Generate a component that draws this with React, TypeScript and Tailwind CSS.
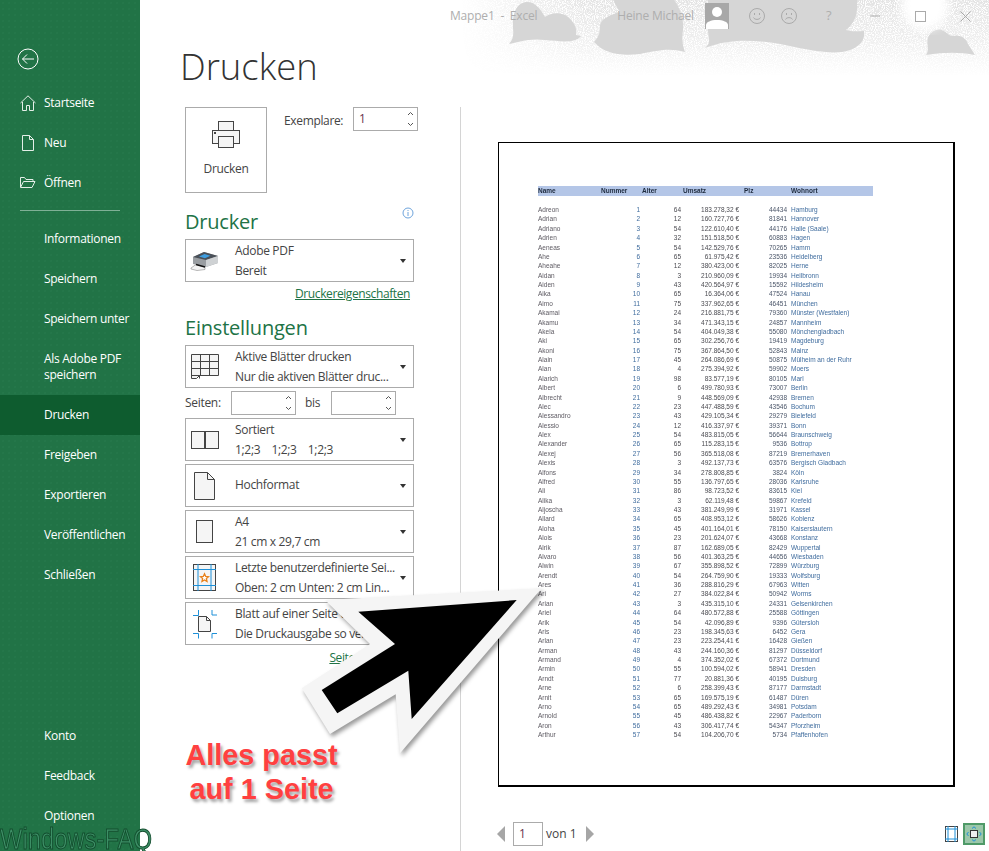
import type { ReactNode } from 'react'

const font = { ui: "font-['Open_Sans','Noto_Sans',sans-serif]" }

type Row = [string, number, number, string, number, string]

const rows: Row[] = [
  ['Adreon', 1, 64, '183.278,32 €', 44434, 'Hamburg'],
  ['Adrian', 2, 12, '160.727,76 €', 81841, 'Hannover'],
  ['Adriano', 3, 54, '122.610,40 €', 44176, 'Halle (Saale)'],
  ['Adrien', 4, 32, '151.518,50 €', 60883, 'Hagen'],
  ['Aeneas', 5, 54, '142.529,76 €', 70265, 'Hamm'],
  ['Ahe', 6, 65, '61.975,42 €', 23536, 'Heidelberg'],
  ['Aheahe', 7, 12, '380.423,00 €', 82025, 'Herne'],
  ['Aidan', 8, 3, '210.960,09 €', 19934, 'Heilbronn'],
  ['Aiden', 9, 43, '420.564,97 €', 15592, 'Hildesheim'],
  ['Aika', 10, 65, '16.364,06 €', 47524, 'Hanau'],
  ['Aimo', 11, 75, '337.962,65 €', 46451, 'München'],
  ['Akamai', 12, 24, '216.881,75 €', 79360, 'Münster (Westfalen)'],
  ['Akamu', 13, 34, '471.343,15 €', 24857, 'Mannheim'],
  ['Akela', 14, 54, '404.049,38 €', 55080, 'Mönchengladbach'],
  ['Aki', 15, 65, '302.256,76 €', 19419, 'Magdeburg'],
  ['Akoni', 16, 75, '367.864,50 €', 52843, 'Mainz'],
  ['Alain', 17, 45, '264.086,69 €', 50875, 'Mülheim an der Ruhr'],
  ['Alan', 18, 4, '275.394,92 €', 59902, 'Moers'],
  ['Alarich', 19, 98, '83.577,19 €', 80105, 'Marl'],
  ['Albert', 20, 6, '499.780,93 €', 73007, 'Berlin'],
  ['Albrecht', 21, 9, '448.569,09 €', 42938, 'Bremen'],
  ['Alec', 22, 23, '447.488,59 €', 43546, 'Bochum'],
  ['Alessandro', 23, 43, '429.105,34 €', 29279, 'Bielefeld'],
  ['Alessio', 24, 12, '416.337,97 €', 39371, 'Bonn'],
  ['Alex', 25, 54, '483.815,05 €', 56644, 'Braunschweig'],
  ['Alexander', 26, 65, '115.283,15 €', 9536, 'Bottrop'],
  ['Alexej', 27, 56, '365.518,08 €', 87219, 'Bremerhaven'],
  ['Alexis', 28, 3, '492.137,73 €', 63576, 'Bergisch Gladbach'],
  ['Alfons', 29, 34, '278.808,85 €', 3824, 'Köln'],
  ['Alfred', 30, 55, '136.797,65 €', 28036, 'Karlsruhe'],
  ['Ali', 31, 86, '98.723,52 €', 83615, 'Kiel'],
  ['Alika', 32, 3, '62.119,48 €', 59867, 'Krefeld'],
  ['Aljoscha', 33, 43, '381.249,99 €', 31971, 'Kassel'],
  ['Allard', 34, 65, '408.953,12 €', 58626, 'Koblenz'],
  ['Aloha', 35, 45, '401.164,01 €', 78150, 'Kaiserslautern'],
  ['Alois', 36, 23, '201.624,07 €', 43668, 'Konstanz'],
  ['Alrik', 37, 87, '162.689,05 €', 82429, 'Wuppertal'],
  ['Alvaro', 38, 56, '401.363,25 €', 44656, 'Wiesbaden'],
  ['Alwin', 39, 67, '355.898,52 €', 72899, 'Würzburg'],
  ['Arendt', 40, 54, '264.759,90 €', 19333, 'Wolfsburg'],
  ['Ares', 41, 36, '288.816,29 €', 67963, 'Witten'],
  ['Ari', 42, 27, '384.022,84 €', 50942, 'Worms'],
  ['Arian', 43, 3, '435.315,10 €', 24331, 'Gelsenkirchen'],
  ['Ariel', 44, 64, '480.572,88 €', 25588, 'Göttingen'],
  ['Arik', 45, 54, '42.096,89 €', 9396, 'Gütersloh'],
  ['Aris', 46, 23, '198.345,63 €', 6452, 'Gera'],
  ['Arlan', 47, 23, '223.254,41 €', 16428, 'Gießen'],
  ['Arman', 48, 43, '244.160,36 €', 81297, 'Düsseldorf'],
  ['Armand', 49, 4, '374.352,02 €', 67372, 'Dortmund'],
  ['Armin', 50, 55, '100.594,02 €', 58941, 'Dresden'],
  ['Arndt', 51, 77, '20.881,36 €', 40195, 'Duisburg'],
  ['Arne', 52, 6, '258.399,43 €', 87177, 'Darmstadt'],
  ['Arnit', 53, 65, '169.575,19 €', 61487, 'Düren'],
  ['Arno', 54, 65, '489.292,43 €', 34981, 'Potsdam'],
  ['Arnold', 55, 45, '486.438,82 €', 22967, 'Paderborn'],
  ['Aron', 56, 43, '306.417,74 €', 54347, 'Pforzheim'],
  ['Arthur', 57, 54, '104.206,70 €', 5734, 'Pfaffenhofen'],
]

function SideItem({ label, icon, active, tall }: { label: string; icon?: ReactNode; active?: boolean; tall?: boolean }) {
  return (
    <div className={`flex items-center pl-[20px] text-white ${tall ? 'h-[56px] leading-[16px]' : 'h-[40px]'} ${active ? 'bg-[#0e5c2f]' : ''}`}>
      <span className="w-[24px] flex-none">{icon}</span>
      <span className="text-[12px] tracking-[-0.3px]">{label}</span>
    </div>
  )
}

function Caret() {
  return <span className="ml-auto mr-[7px] flex-none w-0 h-0 border-x-[3.5px] border-x-transparent border-t-[4px] border-t-[#333]" />
}

function Drop({ icon, line1, line2 }: { icon: ReactNode; line1: string; line2?: string }) {
  return (
    <div className="flex items-center h-[43px] w-[229px] border border-[#ababab] bg-white flex-none">
      <span className="w-[49px] pl-[4px] flex-none flex items-center">{icon}</span>
      <div className={`text-[12px] leading-[20px] text-[#444] whitespace-pre tracking-[-0.33px] ${line2 ? 'pt-[1px]' : '-mt-[2px]'}`}>
        <div>{line1}</div>
        {line2 && <div>{line2}</div>}
      </div>
      <Caret />
    </div>
  )
}

function Spin({ value, className }: { value?: string; className: string }) {
  return (
    <div className={`flex items-center justify-between h-[24px] border border-[#ababab] bg-white text-[12px] text-[#6a3350] pl-[5px] pr-[3px] ${className}`}>
      <span>{value}</span>
      <svg width="7" height="18" viewBox="0 0 7 18" fill="none" stroke="#555" strokeWidth="1">
        <path d="M1 5l2.5-2.5L6 5M1 13l2.5 2.5L6 13" />
      </svg>
    </div>
  )
}

const ico = 'flex-none'

function GridIcon() {
  return (
    <svg className={ico} width="30" height="30" viewBox="0 0 30 30" fill="#f5f5f5" stroke="#444">
      <path d="M1.5 2.5h27v21h-19l-3 3h-5z" />
      <path d="M1.5 9.5h27M1.5 16.5h27M10.5 2.5v21M19.5 2.5v21M1.5 23.5h8v3" fill="none" />
    </svg>
  )
}

function SortIcon() {
  return (
    <svg className={ico} width="30" height="30" viewBox="0 0 30 30" fill="#f5f5f5" stroke="#444">
      <rect x="1.5" y="6.5" width="27" height="17" />
      <path d="M15 6v18" strokeWidth="2" />
    </svg>
  )
}

function PortraitIcon() {
  return (
    <svg className={ico} width="30" height="30" viewBox="0 0 30 30" fill="#f5f5f5" stroke="#444">
      <path d="M4.5 1.5h13l7 7v20h-20z" />
      <path d="M17.5 1.5v7h7" fill="none" />
    </svg>
  )
}

function A4Icon() {
  return (
    <svg className={ico} width="30" height="30" viewBox="0 0 30 30" fill="#f5f5f5" stroke="#444">
      <rect x="6.5" y="3.5" width="16" height="22" />
    </svg>
  )
}

function MarginIcon() {
  return (
    <svg className={ico} width="30" height="30" viewBox="0 0 30 30" fill="none">
      <rect x="3.5" y="1.5" width="22" height="26" fill="#f5f5f5" stroke="#444" />
      <path d="M8 1v27M21 1v27M3 6.5h23M3 22.5h23" stroke="#1e90d8" />
      <path d="M14.5 10.8l1.2 2.6 2.8.3-2.1 1.9.6 2.8-2.5-1.5-2.5 1.5.6-2.8-2.1-1.9 2.8-.3z" fill="#fff" stroke="#e8801a" strokeWidth="1.3" />
    </svg>
  )
}

function FitIcon() {
  return (
    <svg className={ico} width="30" height="30" viewBox="0 0 30 30" fill="none">
      <path d="M8.5 7.5h8l4 4v11h-12z" fill="#f5f5f5" stroke="#444" />
      <path d="M16.5 7.5v4h4" stroke="#444" />
      <path d="M3 6.5h5.5M8.5 1v5.5M22 1v5h5M3 24.5h5.5M8.5 24.5v5M22 29.5v-5h5" stroke="#1e90d8" />
    </svg>
  )
}

function ColorPrinter() {
  return (
    <svg className={ico} width="30" height="30" viewBox="0 0 30 30">
      <path d="M3 11l11-5 14 4v7l-12 4-13-3z" fill="#9a9ea2" />
      <path d="M3 11l11-5 14 4-12 4z" fill="#4a5058" />
      <path d="M9 10.5l5.5-2.5 6 1.7-5.5 2.5z" fill="#3f9ee0" />
      <path d="M16 14l12-4v7l-12 4z" fill="#cfd2d4" />
      <path d="M1 22l5-3.5 9 2.5v2.5l-8 1-6-1.5z" fill="#f4f4f4" stroke="#8a8a8a" strokeWidth=".6" />
      <path d="M6 18.5l9 2.5" stroke="#111" strokeWidth="1.4" />
    </svg>
  )
}

function Title() {
  return (
    <div className="absolute top-0 left-[420px] right-0 h-[80px]">
      <svg className="absolute inset-0" width="569" height="80" viewBox="420 0 569 80">
        <defs>
          <filter id="speckle" x="0" y="0" width="100%" height="100%">
            <feTurbulence type="fractalNoise" baseFrequency="0.9" numOctaves="2" seed="4" />
            <feColorMatrix values="0 0 0 0 1 0 0 0 0 1 0 0 0 0 1 0 0 0 5 -2.2" />
          </filter>
          <filter id="soft">
            <feGaussianBlur stdDeviation="5" />
          </filter>
          <linearGradient id="fadeY" x1="0" y1="0" x2="0" y2="1">
            <stop offset="0" stopColor="#fff" />
            <stop offset=".5" stopColor="#999" />
            <stop offset="1" stopColor="#000" />
          </linearGradient>
          <linearGradient id="fadeX" x1="0" y1="0" x2="1" y2="0">
            <stop offset="0" stopColor="#000" />
            <stop offset=".25" stopColor="#000" stopOpacity="0" />
          </linearGradient>
          <mask id="fade">
            <rect x="460" y="0" width="529" height="76" fill="url(#fadeY)" />
            <rect x="460" y="0" width="529" height="76" fill="url(#fadeX)" />
          </mask>
        </defs>
        <rect x="460" y="0" width="529" height="76" fill="#e3e3e3" mask="url(#fade)" />
        <rect x="460" y="0" width="529" height="76" filter="url(#speckle)" />
        <g fill="#d6d6d6">
          <path d="M509 44C516 36 512 30 513 20C514 8 520 2 527 2C536 2 541 10 545 17C552 12 562 12 568 17C576 24 577 30 576 35L581 36C575 44 560 41 545 40C530 38 518 42 509 44Z" />
          <path d="M594 42C600 36 600 30 600 25C602 18 612 14 620 12C616 6 614 2 614 0L674 0C680 8 684 18 683 30C682 38 682 44 685 52C670 48 660 50 640 54C620 56 605 54 594 42Z" />
          <path d="M705 48C712 42 708 38 708 30L708 0L857 0C858 12 856 22 846 30C852 32 858 31 864 31C866 42 856 50 842 52C825 54 800 48 780 44C755 40 730 38 705 48Z" />
          <path d="M926 55C930 50 926 44 928 38C930 31 938 27 944 31C948 34 950 36 953 36C960 34 966 38 968 44L975 55C960 52 945 52 926 55Z" />
        </g>
        <circle cx="925" cy="6" r="24" fill="#fff" filter="url(#soft)" />
      </svg>
      <div className="relative flex items-center h-[32px] text-[12px] text-[#aeaeae] tracking-[-0.2px]">
        <span className="ml-[30px] whitespace-pre">Mappe1  -  Excel</span>
        <span className="ml-[80px]">Heine Michael</span>
        <span className="ml-[11px] w-[24px] h-[26px] bg-[#a8a8a8] flex-none overflow-hidden flex justify-center items-end">
          <svg width="24" height="26" viewBox="0 0 24 26" fill="#fff">
            <circle cx="12" cy="9" r="5" />
            <path d="M1 26v-4c0-3 5-5 11-5s11 2 11 5v4z" />
          </svg>
        </span>
        <svg className="ml-[20px]" width="16" height="16" viewBox="0 0 16 16" fill="none" stroke="#aaa">
          <circle cx="8" cy="8" r="7.5" />
          <path d="M4.5 9.5c1 2.5 6 2.5 7 0M5.5 5v2M10.5 5v2" />
        </svg>
        <svg className="ml-[16px]" width="16" height="16" viewBox="0 0 16 16" fill="none" stroke="#aaa">
          <circle cx="8" cy="8" r="7.5" />
          <path d="M4.5 11.5c1-2.5 6-2.5 7 0M5.5 5v2M10.5 5v2" />
        </svg>
        <span className="ml-[29px] text-[13px]">?</span>
        <svg className="ml-[39px]" width="10" height="2" viewBox="0 0 10 2" stroke="#aaa"><path d="M0 1h10" /></svg>
        <svg className="ml-[35px]" width="11" height="11" viewBox="0 0 11 11" fill="none" stroke="#aaa"><rect x=".5" y=".5" width="10" height="10" /></svg>
        <svg className="ml-[34px]" width="11" height="11" viewBox="0 0 11 11" stroke="#aaa"><path d="M.5.5l10 10M10.5.5l-10 10" /></svg>
      </div>
    </div>
  )
}

function Paper() {
  return (
    <div className="w-[457px] h-[645px] bg-white border-l border-t border-r-2 border-b-2 border-black pl-[39px] pt-[43px] flex-none">
      <div className="w-[335px] font-['Liberation_Sans',sans-serif] text-[6.5px] blur-[0.3px]">
        <div className="grid grid-cols-[63px_41px_41px_61px_47px_1fr] bg-[#b4c6e7] h-[10px] leading-[10px] font-bold text-[#1d2a3d] mb-[9px]">
          <span>Name</span>
          <span>Nummer</span>
          <span>Alter</span>
          <span>Umsatz</span>
          <span>Plz</span>
          <span>Wohnort</span>
        </div>
        {rows.map((r) => (
          <div key={r[1]} className="grid grid-cols-[63px_39px_41px_58px_48px_1fr] h-[9.39px] leading-[9.39px]">
            <span className="text-[#5d5a62]">{r[0]}</span>
            <span className="text-right text-[#3f6c9e]">{r[1]}</span>
            <span className="text-right text-[#4a4a50]">{r[2]}</span>
            <span className="text-right text-[#4a4a50]">{r[3]}</span>
            <span className="text-right text-[#4a5568]">{r[4]}</span>
            <span className="pl-[4px] text-[#3f6c9e] whitespace-nowrap">{r[5]}</span>
          </div>
        ))}
      </div>
    </div>
  )
}

function Arrow() {
  return (
    <svg className="absolute left-[280px] top-[570px] drop-shadow-[2px_3px_2px_rgba(0,0,0,0.4)]" width="280" height="200" viewBox="280 570 280 200">
      <path d="M541.7 588.3L325 600L370 644L301.7 688.3L330 734L395.7 694.3L400 753.3Z" fill="#f5f5f5" />
      <path d="M516.7 600L358.3 611.7L395 644L321.7 690L337.3 713.3L408.3 670.7L411.7 719Z" fill="#000" />
    </svg>
  )
}

export default function App() {
  return (
    <div className={`relative flex w-[989px] h-[851px] overflow-hidden bg-white ${font.ui}`}>
      <aside className="w-[140px] flex-none flex flex-col bg-[#217346] bg-[radial-gradient(#25774a_0.7px,transparent_0.8px)] bg-[size:6px_6px]">
        <div className="h-[83px] pt-[48px] pl-[17px] flex-none">
          <svg width="22" height="22" viewBox="0 0 22 22" fill="none" stroke="#fff" strokeWidth="1">
            <circle cx="11" cy="11" r="10" />
            <path d="M17 11H5.5M10 6.5L5.5 11l4.5 4.5" />
          </svg>
        </div>
        <SideItem
          label="Startseite"
          icon={
            <svg width="16" height="16" viewBox="0 0 16 16" fill="none" stroke="#e4efe8">
              <path d="M.5 8L8 .8 15.5 8M2.5 7v8.5h4v-5h3v5h4V7" />
            </svg>
          }
        />
        <SideItem
          label="Neu"
          icon={
            <svg className="ml-[1px]" width="14" height="16" viewBox="0 0 14 16" fill="none" stroke="#e4efe8">
              <path d="M1.5.5h7l4 4v11h-11zM8.5.5v4h4" />
            </svg>
          }
        />
        <SideItem
          label="Öffnen"
          icon={
            <svg width="16" height="14" viewBox="0 0 16 14" fill="none" stroke="#e4efe8">
              <path d="M.5 11V1.5h4l1.5 2h7v2M.5 11.5h11.5l3-6h-11.5z" />
            </svg>
          }
        />
        <div className="mx-[20px] mt-[7px] mb-[8px] h-[1px] bg-[#7fb096]" />
        <SideItem label="Informationen" />
        <SideItem label="Speichern" />
        <SideItem label="Speichern unter" />
        <SideItem label="Als Adobe PDF speichern" tall />
        <SideItem label="Drucken" active />
        <SideItem label="Freigeben" />
        <SideItem label="Exportieren" />
        <SideItem label="Veröffentlichen" />
        <SideItem label="Schließen" />
        <div className="mt-auto mb-[15px]">
          <SideItem label="Konto" />
          <SideItem label="Feedback" />
          <SideItem label="Optionen" />
        </div>
      </aside>

      <main className="flex-1 min-w-0 flex flex-col">
        <div className="h-[107px] flex-none pl-[40px] pt-[37px]">
          <h1 className="text-[36.4px] leading-[60px] font-light text-[#333] -mt-[1px]">Drucken</h1>
        </div>
        <div className="flex-1 min-h-0 flex">
          <section className="w-[321px] flex-none border-r border-[#d4d4d4] pl-[45px] flex flex-col items-start">
            <div className="flex items-start">
              <div className="w-[82px] h-[86px] border border-[#ababab] flex flex-col items-center pt-[13px]">
                <svg width="28" height="27" viewBox="0 0 28 27" fill="#f5f5f5" stroke="#444">
                  <rect x="6.5" y=".5" width="15" height="10" />
                  <rect x=".5" y="9.5" width="27" height="13" />
                  <rect x="6.5" y="15.5" width="15" height="11" />
                  <rect x="2.5" y="11.5" width="1" height="1" />
                </svg>
                <span className="mt-[12px] text-[12px] leading-[18px] font-medium text-[#444] tracking-[-0.3px]">Drucken</span>
              </div>
              <span className="ml-[17px] mt-[5px] w-[69px] flex-none text-[12px] leading-[18px] text-[#444] tracking-[-0.35px]">Exemplare:</span>
              <Spin value="1" className="w-[65px]" />
            </div>
            <div className="relative w-[229px] mt-[14px]">
              <h2 className="text-[20px] leading-[30px] text-[#217346] tracking-[-0.2px]">Drucker</h2>
              <svg className="absolute right-0 top-[0px]" width="12" height="12" viewBox="0 0 12 12" fill="none" stroke="#6ea4dc">
                <circle cx="6" cy="6" r="5" />
                <path d="M6 5v4M6 3v1" />
              </svg>
            </div>
            <div className="mt-[2px]"><Drop icon={<ColorPrinter />} line1="Adobe PDF" line2="Bereit" /></div>
            <div className="w-[225px] text-right text-[12px] leading-[18px] mt-[3px] text-[#217346] underline tracking-[-0.4px]">Druckereigenschaften</div>
            <h2 className="text-[20px] leading-[30px] text-[#217346] mt-[10px] tracking-[-0.2px]">Einstellungen</h2>
            <div className="mt-[2px]"><Drop icon={<GridIcon />} line1="Aktive Blätter drucken" line2="Nur die aktiven Blätter druc..." /></div>
            <div className="flex items-center h-[24px] mt-[3px] text-[12px] text-[#444] w-[229px] tracking-[-0.3px]">
              <span className="w-[46px]">Seiten:</span>
              <Spin className="w-[65px]" />
              <span className="ml-[9px] w-[26px]">bis</span>
              <Spin className="w-[65px]" />
            </div>
            <div className="mt-[3px] flex flex-col gap-[3px]">
              <Drop icon={<SortIcon />} line1="Sortiert" line2="1;2;3    1;2;3    1;2;3" />
              <Drop icon={<PortraitIcon />} line1="Hochformat" />
              <Drop icon={<A4Icon />} line1="A4" line2="21 cm x 29,7 cm" />
              <Drop icon={<MarginIcon />} line1="Letzte benutzerdefinierte Sei..." line2="Oben: 2 cm Unten: 2 cm Lin..." />
              <Drop icon={<FitIcon />} line1="Blatt auf einer Seite darstellen" line2="Die Druckausgabe so verkleinern" />
            </div>
            <div className="w-[225px] text-right text-[12px] leading-[18px] mt-[4px] text-[#217346] underline tracking-[-0.4px]">Seite einrichten</div>
          </section>

          <section className="flex-1 min-w-0 pl-[37px] pt-[35px] flex flex-col">
            <Paper />
            <div className="mt-auto mb-[5px] flex items-center h-[24px] text-[12px] text-[#444]">
              <span className="-ml-[1px] w-0 h-0 border-y-[8px] border-y-transparent border-r-[8px] border-r-[#a6a6a6]" />
              <span className="ml-[8px] w-[30px] h-[24px] border border-[#ababab] pl-[5px] leading-[22px] text-[#6a3350]">1</span>
              <span className="ml-[3px]">von 1</span>
              <span className="ml-[9px] w-0 h-0 border-y-[8px] border-y-transparent border-l-[8px] border-l-[#a6a6a6]" />
              <svg className="ml-auto" width="13" height="16" viewBox="0 0 13 16" fill="none">
                <rect x=".5" y=".5" width="12" height="15" stroke="#444" />
                <path d="M3 0v16M10 0v16M0 3h13M0 13h13" stroke="#1e90d8" />
              </svg>
              <span className="ml-[5px] mr-[4px] w-[22px] h-[22px] border-2 border-[#4f9a68] bg-[#9cc7aa] flex items-center justify-center">
                <svg width="16" height="16" viewBox="0 0 16 16" fill="none">
                  <rect x="4.5" y="4.5" width="7" height="7" fill="#eee" stroke="#333" />
                  <path d="M6 2.5L8 .8l2 1.7M6 13.5l2 1.7 2-1.7M2.5 6L.8 8l1.7 2M13.5 6l1.7 2-1.7 2" stroke="#1e90d8" />
                </svg>
              </span>
            </div>
          </section>
        </div>
      </main>

      <Title />
      <Arrow />

      <div className="absolute left-[140px] top-[738px] w-[243px] text-center font-['Liberation_Sans',sans-serif] font-bold text-[28.8px] leading-[34px] text-[#ff4040] [text-shadow:2px_3px_3px_rgba(0,0,0,0.35)]">
        <div>Alles passt</div>
        <div>auf 1 Seite</div>
      </div>

      <div className="absolute left-0 top-[827px] origin-left scale-x-[0.82] font-['Liberation_Sans',sans-serif] text-[29px] leading-[24px] whitespace-nowrap text-[#3d8f66] [-webkit-text-stroke:1px_#134d2e]">Windows-FAQ</div>
    </div>
  )
}
